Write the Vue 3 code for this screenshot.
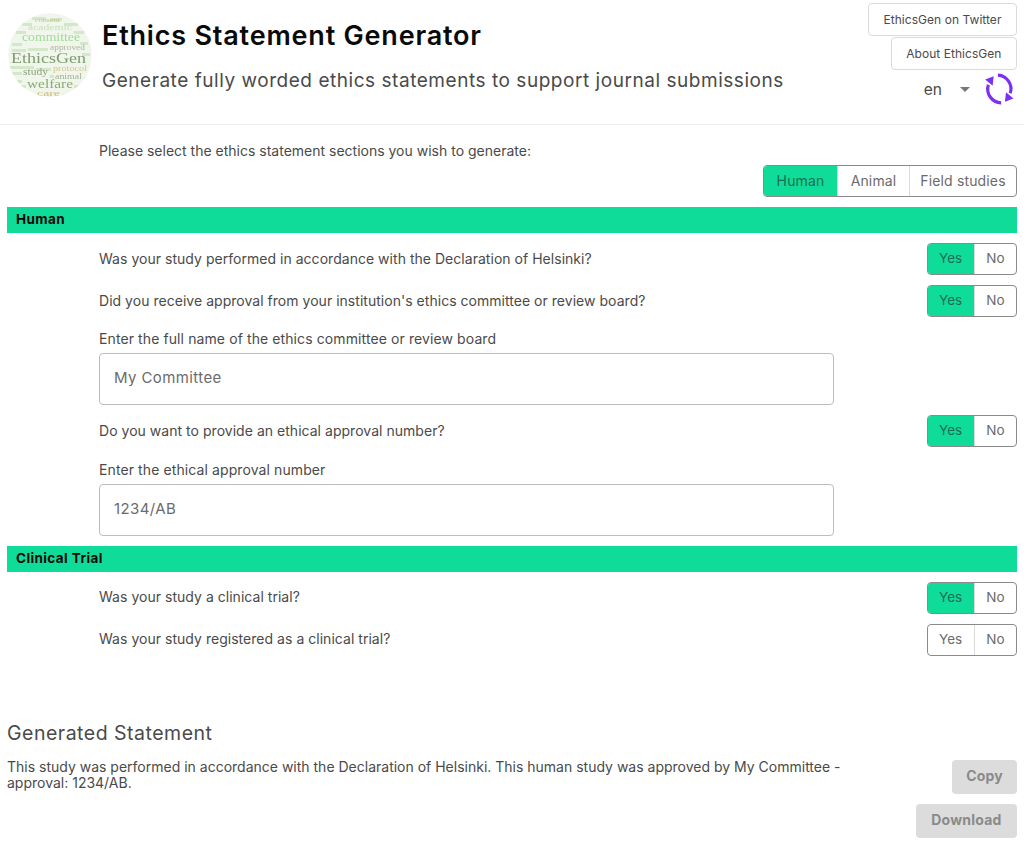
<script setup>
// word cloud: x, baseline y, fitted width, font size, colour (logo pixels)
const words = [
  ['consent', 27, 9, 25, 7, '#c9be8c'],
  ['academic', 20, 17, 44, 8, '#c4dfb8'],
  ['committee', 14, 28, 58, 12, '#9fdc94'],
  ['approved', 42, 37, 35, 8, '#a9b89e'],
  ['EthicsGen', 3, 50, 75, 15, '#7d9c70'],
  ['protocol', 45, 58, 34, 8, '#d2c68c'],
  ['study', 15, 62, 25, 10, '#8ea081'],
  ['animal', 47, 66, 27, 8, '#a3b096'],
  ['welfare', 19, 75, 46, 12, '#8cab74'],
  ['care', 29, 83, 23, 8, '#cdbb70'],
]

// the tiny words of the cloud are unreadable in the picture, so just pale dashes
const specks = [
  [24, 4, 14], [42, 5, 12], [14, 10, 10], [56, 10, 14], [8, 18, 10], [66, 18, 10],
  [4, 30, 10], [72, 29, 8], [4, 36, 14], [20, 35, 20], [74, 40, 8], [2, 53, 24],
  [28, 55, 15], [4, 59, 10], [42, 62, 4], [5, 67, 9], [76, 64, 6], [8, 72, 10],
  [66, 72, 12], [14, 78, 6], [66, 77, 8], [54, 81, 10], [18, 81, 10],
]

const humanRows = [
  { q: 'Was your study performed in accordance with the Declaration of Helsinki?', on: true },
  { q: "Did you receive approval from your institution's ethics committee or review board?", on: true, label: 'Enter the full name of the ethics committee or review board', value: 'My Committee' },
  { q: 'Do you want to provide an ethical approval number?', on: true, label: 'Enter the ethical approval number', value: '1234/AB' },
]

const trialRows = [
  { q: 'Was your study a clinical trial?', on: true },
  { q: 'Was your study registered as a clinical trial?', on: false },
]
</script>

<template>
  <div class="page">
    <header class="top">
      <svg class="logo" viewBox="0 0 84 84" width="84" height="84" font-family="Liberation Serif, serif">
        <defs>
          <clipPath id="logo-round"><circle cx="42" cy="42" r="42" /></clipPath>
          <filter id="logo-soft" x="-5%" y="-5%" width="110%" height="110%">
            <feGaussianBlur stdDeviation="0.3" />
          </filter>
        </defs>
        <g clip-path="url(#logo-round)" filter="url(#logo-soft)">
          <circle cx="42" cy="42" r="42" fill="#f1f6ec" />
          <rect
            v-for="(s, i) in specks"
            :key="i"
            :x="s[0]"
            :y="s[1]"
            :width="s[2]"
            height="3"
            fill="#d3e7c9"
          />
          <text
            v-for="w in words"
            :key="w[0]"
            :x="w[1]"
            :y="w[2]"
            :textLength="w[3]"
            lengthAdjust="spacingAndGlyphs"
            :font-size="w[4]"
            :fill="w[5]"
          >{{ w[0] }}</text>
        </g>
      </svg>
      <div class="titles">
        <h1>Ethics Statement Generator</h1>
        <p>Generate fully worded ethics statements to support journal submissions</p>
      </div>
      <div class="top-right">
        <a class="link-btn">EthicsGen on Twitter</a>
        <a class="link-btn">About EthicsGen</a>
        <div class="lang">
          <span class="lang-code">en</span>
          <span class="caret"></span>
          <svg class="sync" viewBox="0 0 32 32" width="34" height="34" fill="none">
            <path d="M6 12A13 13 0 0 0 18 29" stroke="#7b2ff7" stroke-width="3" />
            <path d="M15 3A13 13 0 0 1 26.6 20" stroke="#7b2ff7" stroke-width="3" />
            <path d="M11 4L3 7l7 6z" fill="#7b2ff7" />
            <path d="M21.6 28l8-3-7-6z" fill="#7b2ff7" />
          </svg>
        </div>
      </div>
    </header>

    <main class="body">
      <div class="intro">
        <div class="indent">Please select the ethics statement sections you wish to generate:</div>
        <div class="group-end">
          <div class="group wide">
            <span class="on">Human</span>
            <span>Animal</span>
            <span>Field studies</span>
          </div>
        </div>
      </div>

      <div class="bar">Human</div>
      <div class="rows">
        <template v-for="r in humanRows" :key="r.q">
          <div class="row">
            <span class="indent">{{ r.q }}</span>
            <div class="group">
              <span :class="{ on: r.on }">Yes</span>
              <span>No</span>
            </div>
          </div>
          <div v-if="r.label" class="field">
            <label>{{ r.label }}</label>
            <input :value="r.value" type="text" />
          </div>
        </template>
      </div>

      <div class="bar">Clinical Trial</div>
      <div class="rows">
        <div v-for="r in trialRows" :key="r.q" class="row">
          <span class="indent">{{ r.q }}</span>
          <div class="group">
            <span :class="{ on: r.on }">Yes</span>
            <span>No</span>
          </div>
        </div>
      </div>

      <section class="result">
        <h2>Generated Statement</h2>
        <div class="result-row">
          <p>This study was performed in accordance with the Declaration of Helsinki. This human study was approved by My Committee - approval: 1234/AB.</p>
          <div class="actions">
            <button>Copy</button>
            <button>Download</button>
          </div>
        </div>
      </section>
    </main>
  </div>
</template>

<style>
body {
  background: #fff;
}
</style>

<style scoped>
.page {
  width: 1024px;
  height: 851px;
  overflow: hidden;
  font-family: Inter, "Liberation Sans", sans-serif;
  font-size: 14px;
  color: #4a4a4a;
  background: #fff;
  box-sizing: border-box;
}

.top {
  display: flex;
  height: 125px;
  box-sizing: border-box;
  border-bottom: 1px solid #ededed;
  padding: 3px 7px 0 8px;
}

.logo {
  flex: none;
  margin: 10px 10px 0 0;
}

.titles {
  flex: 1;
}

h1 {
  margin: 18px 0 0 0;
  font-size: 27px;
  line-height: 30px;
  font-weight: 600;
  letter-spacing: 0.8px;
  color: #0a0a0a;
}

.titles p {
  margin: 18px 0 0 0;
  font-size: 19px;
  line-height: 24px;
  letter-spacing: 0.54px;
  color: #4a4a4a;
}

.top-right {
  display: flex;
  flex-direction: column;
  align-items: flex-end;
  gap: 1px;
}

.link-btn {
  display: block;
  height: 33px;
  line-height: 31px;
  padding: 0 14.5px;
  box-sizing: border-box;
  border: 1px solid #dbdbdb;
  border-radius: 4px;
  font-size: 12px;
  letter-spacing: 0.05px;
  color: #4a4a4a;
}

.lang {
  display: flex;
  align-items: center;
  height: 34px;
  margin-top: 1px;
  margin-right: 1px;
}

.lang-code {
  font-size: 15.5px;
  margin-right: 18px;
}

.caret {
  width: 0;
  height: 0;
  border-left: 5px solid transparent;
  border-right: 5px solid transparent;
  border-top: 5px solid #777;
  margin-right: 12px;
}

.body {
  padding: 0 7px;
}

.intro {
  padding-top: 17px;
}

.indent {
  display: block;
  padding-left: 92px;
}

.intro .indent {
  line-height: 18px;
}

.row .indent {
  padding-bottom: 2px;
  letter-spacing: 0.03px;
}

.group-end {
  display: flex;
  justify-content: flex-end;
  margin-top: 5px;
}

.group {
  display: inline-flex;
  height: 32px;
  box-sizing: border-box;
  border: 1px solid #8a8a8a;
  border-radius: 4px;
  overflow: hidden;
  flex: none;
  font-size: 13.5px;
}

.group span {
  display: flex;
  align-items: center;
  padding: 0 11.5px 2px;
  color: #6b6b6b;
  border-left: 1px solid #dbdbdb;
}

.group span:first-child {
  border-left: 0;
}

.group.wide {
  font-size: 14px;
  letter-spacing: 0.15px;
}

.group.wide span {
  justify-content: center;
  padding: 0 0 2px;
  width: 71px;
}

.group.wide span:first-child {
  width: 73px;
}

.group.wide span:last-child {
  width: 106px;
}

.group .on {
  background: #0fdc99;
  color: #1d6e52;
}

.bar {
  height: 26px;
  line-height: 25px;
  margin-top: 10px;
  padding-left: 9px;
  background: #0fdc99;
  color: #0a0a0a;
  font-weight: 700;
  font-size: 13.5px;
  letter-spacing: 0.4px;
}

.rows {
  padding-top: 10px;
}

.row {
  display: flex;
  justify-content: space-between;
  align-items: center;
  height: 32px;
  margin-bottom: 10px;
}

.field {
  padding-left: 92px;
  margin-top: 13.4px;
  margin-bottom: 10px;
}

.field label {
  display: block;
  line-height: 18px;
  margin-bottom: 5px;
  letter-spacing: 0.1px;
}

.field input {
  display: block;
  width: 735px;
  height: 52px;
  box-sizing: border-box;
  padding: 0 14px 3px;
  border: 1px solid #bdbdbd;
  border-radius: 4px;
  font: inherit;
  font-size: 15px;
  letter-spacing: 0.4px;
  color: #6b6b6b;
  outline: 0;
}

.result {
  margin-top: 65px;
}

h2 {
  margin: 0;
  font-size: 19.5px;
  line-height: 24px;
  font-weight: 400;
  letter-spacing: 0.5px;
  color: #4a4a4a;
}

.result-row {
  display: flex;
  justify-content: space-between;
  align-items: flex-start;
}

.result-row p {
  width: 850px;
  margin: 14px 0 0 0;
  line-height: 16px;
}

.actions {
  display: flex;
  flex-direction: column;
  align-items: flex-end;
  gap: 10px;
  margin-top: 15px;
}

.actions button {
  height: 34px;
  padding: 0 15.5px 2px;
  border: 0;
  border-radius: 4px;
  background: #dcdcdc;
  color: #8a8a8a;
  font: inherit;
  font-weight: 700;
  letter-spacing: 0.2px;
}

.actions button:first-child {
  padding: 0 14px 2px;
}
</style>
